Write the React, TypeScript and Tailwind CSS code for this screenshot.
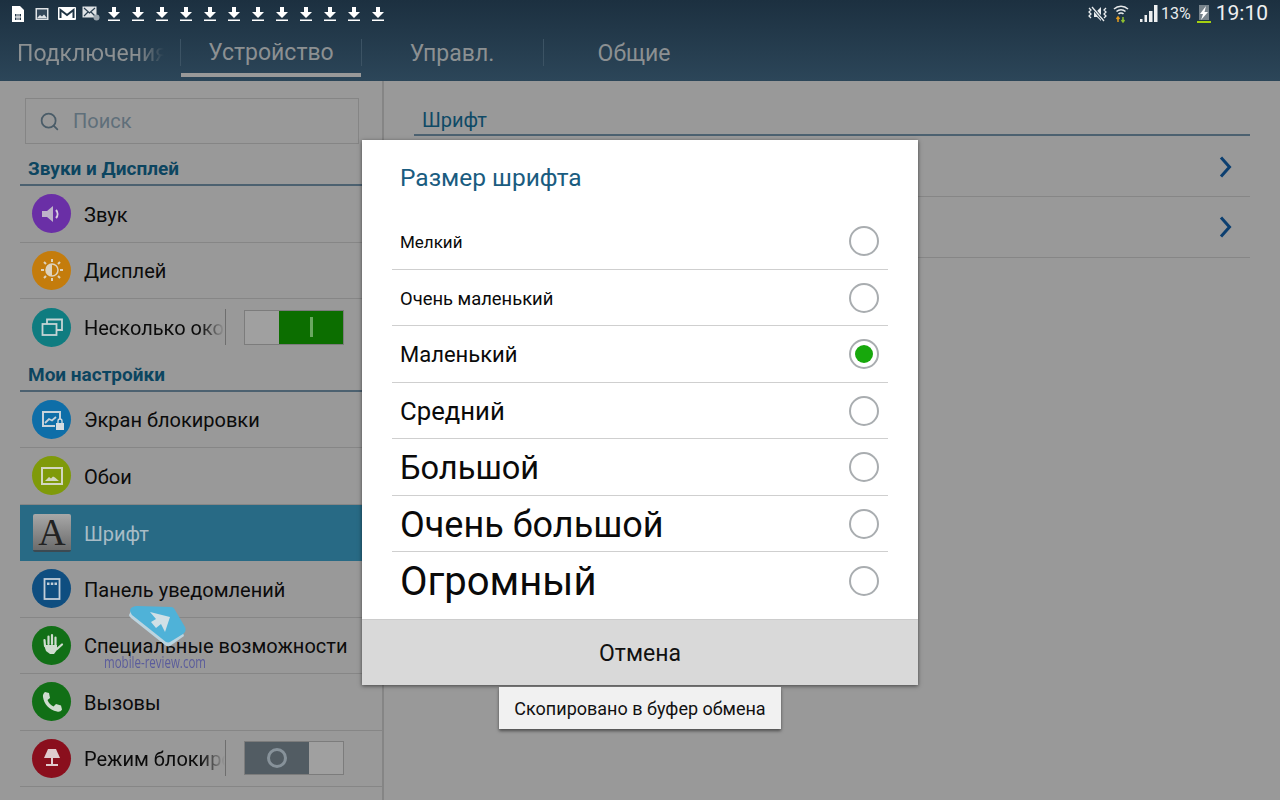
import { Search } from "lucide-react";
import type { ReactNode } from "react";

const fadeText =
  "overflow-hidden whitespace-nowrap [mask-image:linear-gradient(to_right,black_82%,transparent)]";

// ── Status bar glyphs ───────────────────────────────

function DownloadGlyph() {
  return (
    <svg width="14" height="16" viewBox="0 0 14 16" className="shrink-0">
      <path d="M5 1h4v5h4l-6 6-6-6h4z" fill="#fff" />
      <rect x="1" y="13.5" width="12" height="1.5" fill="#fff" />
    </svg>
  );
}

function NotificationIcons() {
  return (
    <div className="flex items-center">
      <svg width="14" height="18" viewBox="0 0 14 18" className="ml-[11px]">
        <path d="M1 1h8l4 4v12H1z" fill="#fff" />
        <path d="M4 9h6v6H4z" fill="#24394a" />
        <path d="M6 9v6M8 9v6M4 12h6" stroke="#fff" strokeWidth="1" />
      </svg>
      <svg width="14" height="14" viewBox="0 0 14 14" className="ml-[10px]">
        <rect x="0.5" y="1" width="13" height="12" fill="#dfe3e6" />
        <rect x="2" y="2.5" width="10" height="9" fill="#33485a" />
        <path d="M2 11l3-3 2 1.500 2-2 3 3.500z" fill="#dfe3e6" />
      </svg>
      <svg width="18" height="13" viewBox="0 0 18 13" className="ml-[9px]">
        <rect width="18" height="13" rx="1" fill="#fff" />
        <path d="M2.500 11V3l6.500 5 6.500-5v8" fill="none" stroke="#1f3444" strokeWidth="2" />
      </svg>
      <svg width="18" height="15" viewBox="0 0 18 15" className="ml-[6px]">
        <rect x="0.500" y="0.500" width="14" height="11" fill="#dfe3e6" />
        <path d="M2 2l5.500 5L13 2M2 10l4-4M13 10L9 6" fill="none" stroke="#2a3f50" strokeWidth="1.200" />
        <circle cx="14.500" cy="11.500" r="3" fill="#9aa5ad" />
      </svg>
      <div className="flex ml-[7px] gap-[10px]">
        {Array.from({ length: 12 }, (_, i) => (
          <DownloadGlyph key={i} />
        ))}
      </div>
    </div>
  );
}

function SystemIcons() {
  return (
    <div className="flex items-center">
      <svg width="24" height="16" viewBox="0 0 24 16">
        <path d="M9 5h3l4-4v14l-4-4H9z" fill="#e8ebed" />
        <path d="M4 2l2 2-2 2 2 2-2 2 2 2M21 2l-2 2 2 2-2 2 2 2-2 2" fill="none" stroke="#e8ebed" strokeWidth="1.300" />
        <path d="M7 1l12 14" stroke="#1f3444" strokeWidth="3" />
        <path d="M7 1l12 14" stroke="#e8ebed" strokeWidth="1.300" />
      </svg>
      <svg width="16" height="20" viewBox="0 0 16 20" className="ml-[4px]">
        <path d="M1 5a10 10 0 0 1 14 0M3.500 7.500a6.500 6.500 0 0 1 9 0M5.500 10a3.500 3.500 0 0 1 5 0" fill="none" stroke="#e6e9ea" strokeWidth="1.500" />
        <path d="M5 13v5M3.500 15L5 13l1.500 2" fill="none" stroke="#e09a20" strokeWidth="1.500" />
        <path d="M10 18v-5M8.500 16l1.500 2 1.500-2" fill="none" stroke="#8fbf30" strokeWidth="1.500" />
      </svg>
      <svg width="18" height="17" viewBox="0 0 18 17" className="ml-[11px]">
        <path d="M0 14h2.500v3H0zM4.500 10H7v7H4.500zM9 6h3.500v11H9zM14 0h3.500v17H14z" fill="#eef0f1" />
      </svg>
      <span className="ml-[3px] text-[16px] leading-none text-[#e8ebed]">13%</span>
      <svg width="16" height="20" viewBox="0 0 16 20" className="ml-[5px]">
        <rect x="3" y="1" width="10" height="15" fill="#78848c" />
        <path d="M10 2L4 10h3l-2 6 7-8H8.500z" fill="#fff" />
        <rect x="1" y="17" width="14" height="2" fill="#a4d010" />
      </svg>
      <span className="ml-[4px] text-[21px] leading-none text-[#eef0f1]">19:10</span>
    </div>
  );
}

// ── Sidebar icons ───────────────────────────────────

function Circle({ color, children }: { color: string; children: ReactNode }) {
  return (
    <div className={`w-[39px] h-[39px] rounded-full flex items-center justify-center shrink-0 ${color}`}>
      <svg width="26" height="26" viewBox="0 0 26 26">
        {children}
      </svg>
    </div>
  );
}

const icons: Record<string, ReactNode> = {
  sound: (
    <Circle color="bg-[#6a2fa6]">
      <path d="M3 10h5l6-5v16l-6-5H3z" fill="#bdb3c9" />
      <path d="M17 9a6 6 0 0 1 0 8" fill="none" stroke="#d8d0e0" strokeWidth="2" />
    </Circle>
  ),
  display: (
    <Circle color="bg-[#c47c0c]">
      <path d="M13 7a6 6 0 0 0 0 12z" fill="#ddd2bd" />
      <circle cx="13" cy="13" r="6" fill="none" stroke="#ddd2bd" strokeWidth="1.500" />
      <path d="M13 2v3M13 21v3M2 13h3M21 13h3M5 5l2 2M19 19l2 2M5 21l2-2M19 7l2-2" stroke="#ddd2bd" strokeWidth="2" />
    </Circle>
  ),
  windows: (
    <Circle color="bg-[#0f7c80]">
      <rect x="3.500" y="10" width="14" height="11" fill="none" stroke="#c5d4d4" strokeWidth="1.800" />
      <path d="M8 10V5.500h15V16h-5.500" fill="none" stroke="#c5d4d4" strokeWidth="1.800" />
    </Circle>
  ),
  lock: (
    <Circle color="bg-[#0e6ea8]">
      <path d="M16 20H4V6h17v7" fill="none" stroke="#c6d2da" strokeWidth="2" />
      <path d="M6 17l4-4 3 1.500 4-3.500" fill="none" stroke="#c6d2da" strokeWidth="1.800" />
      <rect x="17" y="17" width="8" height="7" fill="#d5dde2" />
      <path d="M19 17v-2a2 2 0 0 1 4 0v2" fill="none" stroke="#d5dde2" strokeWidth="1.300" />
    </Circle>
  ),
  wallpaper: (
    <Circle color="bg-[#7f9a0a]">
      <rect x="3" y="5" width="20" height="16" fill="none" stroke="#d2d6c0" strokeWidth="2" />
      <path d="M6 18l4-4 2 1.500 2-2 2 1 4 3.500z" fill="#d2d6c0" />
    </Circle>
  ),
  panel: (
    <Circle color="bg-[#0f4e80]">
      <rect x="5.500" y="3" width="15" height="20" fill="none" stroke="#c2ced8" strokeWidth="1.800" />
      <path d="M8 6.500h2.500V9H8zM11.800 6.500h2.500V9h-2.500zM15.500 6.500H18V9h-2.500z" fill="#c2ced8" />
    </Circle>
  ),
  hand: (
    <Circle color="bg-[#116f16]">
      <path d="M6 14L5.500 8M9.500 12V4.500M13 12V3M16.500 13V5.500M18 17l5-4.500" fill="none" stroke="#cfdccf" strokeWidth="2.200" strokeLinecap="round" />
      <path d="M5 13h13v5l-3 4h-4l-4-3z" fill="#cfdccf" />
    </Circle>
  ),
  call: (
    <Circle color="bg-[#116f16]">
      <path d="M6 3l4 1 1 5-2.500 2c1 3 3 5 6 6.500l2.500-2.500 5 1.500 1 4c-1 2-3 2.500-5 2C10 21 5 15 4 8c-.3-2 .5-4 2-5z" fill="#cfdccf" />
    </Circle>
  ),
  blocking: (
    <Circle color="bg-[#8a0f1d]">
      <path d="M9 4h8l4 9H5z" fill="#e0cbce" />
      <rect x="12" y="13" width="2" height="6" fill="#e0cbce" />
      <rect x="7" y="19" width="12" height="2" fill="#e0cbce" />
    </Circle>
  ),
};

// ── Sidebar rows ────────────────────────────────────

function Row({ icon, label, toggle }: { icon: string; label: string; toggle?: ReactNode }) {
  return (
    <div className="h-[56.500px] border-b border-[#868686] pl-[12px] flex items-center shrink-0">
      {icons[icon]}
      {toggle ? (
        <>
          <span className={`ml-[13px] w-[141px] pt-[2px] text-[20px] text-[#0b0b0b] ${fadeText}`}>{label}</span>
          <div className="w-px h-[36px] bg-[#6e6e6e]" />
          {toggle}
        </>
      ) : (
        <span className="ml-[13px] pt-[2px] text-[20px] text-[#0b0b0b] whitespace-nowrap">{label}</span>
      )}
    </div>
  );
}

function SectionTitle({ title }: { title: string }) {
  return (
    <div className="h-[36px] flex items-end pb-[4px] pl-[8px] border-b-2 border-[#4c6170] text-[19px] leading-[22px] font-bold text-[#0c4560] shrink-0">
      {title}
    </div>
  );
}

function Sidebar() {
  return (
    <aside className="w-[384px] h-full shrink-0 border-r-2 border-[#858585] pl-[20px] overflow-hidden flex flex-col">
      <div className="ml-[5px] mt-[17px] mb-[6px] w-[334px] h-[46px] border border-[#858585] flex items-center pl-[13px] shrink-0">
        <Search size={21} strokeWidth={2} className="text-[#4a5c68]" />
        <span className="ml-[13px] text-[20px] text-[#5f6f7a]">Поиск</span>
      </div>
      <SectionTitle title="Звуки и Дисплей" />
      <Row icon="sound" label="Звук" />
      <Row icon="display" label="Дисплей" />
      <div className="h-[56.500px] pl-[12px] flex items-center shrink-0">
        {icons.windows}
        <span className={`ml-[13px] w-[141px] pt-[2px] text-[20px] text-[#0b0b0b] ${fadeText}`}>Несколько окон</span>
        <div className="w-px h-[36px] bg-[#6e6e6e]" />
        <div className="ml-[18px] w-[100px] h-[35px] border border-[#7c7c7c] bg-[#a0a0a0] flex justify-end">
          <div className="w-[64px] h-full bg-[#0c6e00] flex items-center justify-center">
            <div className="w-[3px] h-[20px] bg-[#6aa860]" />
          </div>
        </div>
      </div>
      <SectionTitle title="Мои настройки" />
      <Row icon="lock" label="Экран блокировки" />
      <Row icon="wallpaper" label="Обои" />
      <div className="h-[56.500px] pl-[13px] bg-[#286a85] flex items-center shrink-0">
        <div className="w-[38px] h-[38px] rounded-[2px] bg-gradient-to-b from-[#a8a8a8] to-[#6c6c6c] border-b-2 border-[#3c4a52] flex items-center justify-center font-['Liberation_Serif',serif] text-[38px] leading-none text-[#222222]">
          A
        </div>
        <span className="ml-[13px] pt-[2px] text-[20px] text-[#a8bcc6]">Шрифт</span>
      </div>
      <Row icon="panel" label="Панель уведомлений" />
      <Row icon="hand" label="Специальные возможности" />
      <Row icon="call" label="Вызовы" />
      <Row
        icon="blocking"
        label="Режим блокировки"
        toggle={
          <div className="ml-[18px] w-[100px] h-[34px] border border-[#7c7c7c] bg-[#a0a0a0] flex">
            <div className="w-[64px] h-full bg-[#525c63] flex items-center justify-center">
              <div className="w-[20px] h-[20px] rounded-full border-[3px] border-[#87929a]" />
            </div>
          </div>
        }
      />
    </aside>
  );
}

// ── Font size dialog ────────────────────────────────

const sizes = [
  { label: "Мелкий", cls: "text-[17px]" },
  { label: "Очень маленький", cls: "text-[18.400px]" },
  { label: "Маленький", cls: "text-[22px]" },
  { label: "Средний", cls: "text-[25.700px]" },
  { label: "Большой", cls: "text-[32.600px]" },
  { label: "Очень большой", cls: "text-[36px]" },
  { label: "Огромный", cls: "text-[40px]" },
];

function Chevron() {
  return (
    <svg width="13" height="22" viewBox="0 0 13 22">
      <path d="M2 1.500L10.500 11 2 20.500" fill="none" stroke="#0c3f70" strokeWidth="3" />
    </svg>
  );
}

function FontSizeDialog() {
  return (
    <div className="absolute left-[362px] top-[140px] w-[556px] h-[545px] bg-white shadow-[0_1px_4px_rgba(0,0,0,0.55)] flex flex-col">
      <div className="h-[73px] pl-[38px] pt-[21px] text-[24.500px] leading-[34px] text-[#1a5c80] shrink-0">Размер шрифта</div>
      <div className="mx-[30px] flex-1">
        {sizes.map((s, i) => (
          <div
            key={s.label}
            className={`h-[56.500px] pl-[8px] pr-[9px] flex items-center justify-between text-[#0a0a0a] ${
              i < sizes.length - 1 ? "border-b border-[#cfcfcf]" : ""
            }`}
          >
            <span className={`${s.cls} leading-none pt-[3px]`}>{s.label}</span>
            <div className="w-[30px] h-[30px] mt-[1px] rounded-full border-2 border-[#a9adb0] flex items-center justify-center">
              {i === 2 && <div className="w-[18px] h-[18px] rounded-full bg-[#17a80c]" />}
            </div>
          </div>
        ))}
      </div>
      <div className="h-[66px] bg-[#d9d9d9] border-t border-[#cccccc] flex items-center justify-center text-[23px] pt-[3px] text-[#111111] shrink-0">
        Отмена
      </div>
    </div>
  );
}

export default function App() {
  return (
    <div className="relative w-[1280px] h-[800px] overflow-hidden bg-[#999999] font-['Roboto',sans-serif]">
      <header className="h-[81px] bg-gradient-to-b from-[#1c3040] to-[#2c4659] flex flex-col">
        <div className="h-[27px] flex items-center justify-between pr-[12px] shrink-0">
          <NotificationIcons />
          <SystemIcons />
        </div>
        <nav className="flex-1 flex text-[23px] text-[#8c9092]">
          <div className="w-[180px] pl-[17px] flex items-center">
            <span className={`w-[147px] ${fadeText}`}>Подключения</span>
          </div>
          <div className="w-px h-[27px] mt-[12px] bg-[#3c5364]" />
          <div className="w-[180px] h-[50px] border-b-[4px] border-[#999999] flex items-center justify-center pt-[7px]">Устройство</div>
          <div className="w-px h-[27px] mt-[12px] bg-[#3c5364]" />
          <div className="w-[181px] flex items-center justify-center pr-[1px]">Управл.</div>
          <div className="w-px h-[27px] mt-[12px] bg-[#3c5364]" />
          <div className="w-[181px] flex items-center justify-center pr-[1px]">Общие</div>
        </nav>
      </header>

      <main className="h-[719px] flex">
        <Sidebar />
        <section className="flex-1 pl-[30px] pr-[30px] pt-[27px]">
          <div className="h-[28px] pl-[8px] border-b-2 border-[#4c6170] text-[20px] leading-[24px] text-[#0f4a66]">Шрифт</div>
          <div className="h-[61px] border-b border-[#868686] flex items-center justify-end pr-[18px] pt-[2px]">
            <Chevron />
          </div>
          <div className="h-[61px] border-b border-[#868686] flex items-center justify-end pr-[18px]">
            <Chevron />
          </div>
        </section>
      </main>

      {/* Watermark sits on top of the sidebar */}
      <div className="absolute left-[104px] top-[604px] w-[102px] flex flex-col">
        <svg width="58" height="44" viewBox="0 0 58 44" className="ml-[25px]">
          <path d="M1 9L0 11c0 1 1 2 2 3l34 27c1 1 3 2 5 1l14-10-1-3L2 6z" fill="#bcd4df" />
          <path d="M1 6c1-3 4-4 7-4l34 1c2 0 3 1 4 3l10 17c1 2 1 5-2 7l-13 8c-2 1-3 0-4 0L3 11C2 9 1 8 1 6z" fill="#4fb2d8" />
          <path d="M21 8l20 5-5 15-4-8-5 4-5-6 5-3z" fill="#d0e0e6" />
        </svg>
        <span className="text-[16px] leading-none mt-[6px] text-[#5a5c9c] origin-left scale-x-[0.72] whitespace-nowrap font-['Open_Sans',sans-serif]">
          mobile-review.com
        </span>
      </div>

      <FontSizeDialog />

      <div className="absolute left-[499px] top-[687px] w-[282px] h-[42px] bg-[#f1f1f1] shadow-[0_2px_3px_rgba(0,0,0,0.5)] flex items-center justify-center text-[18px] text-[#111111]">
        Скопировано в буфер обмена
      </div>
    </div>
  );
}
